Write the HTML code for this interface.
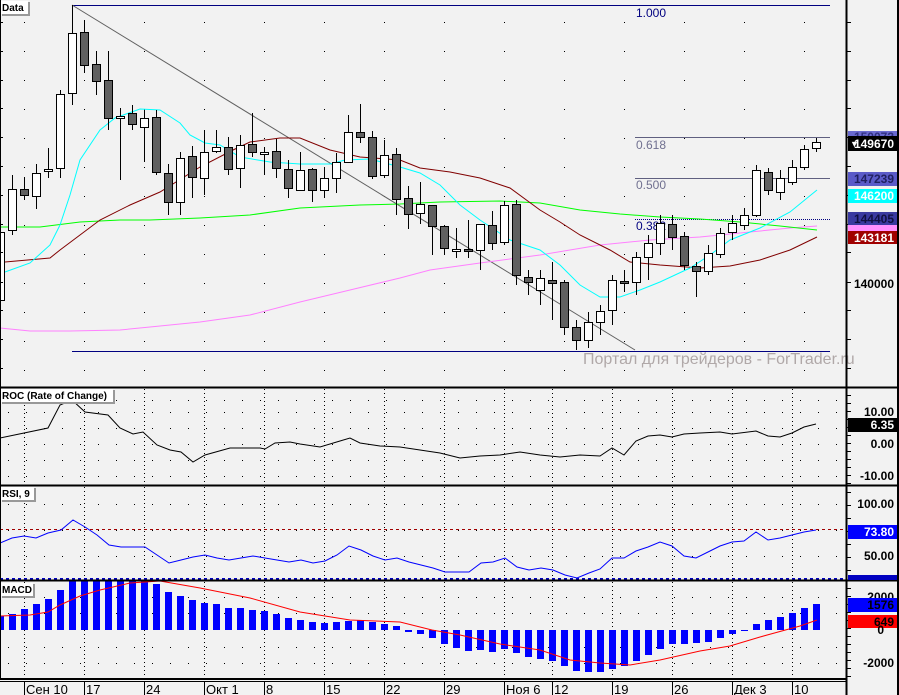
<!DOCTYPE html>
<html><head><meta charset="utf-8"><style>
html,body{margin:0;padding:0;background:#f2f2f2;}
svg{display:block;font-family:"Liberation Sans",sans-serif;}
.ax{font-family:"Liberation Sans",sans-serif;font-weight:bold;font-size:12px;}
</style></head><body>
<svg id="s" width="899" height="695" viewBox="0 0 899 695" xmlns="http://www.w3.org/2000/svg">
<rect width="899" height="695" fill="#f2f2f2"/>
<g id="grid"></g>
<line x1="72" y1="5.5" x2="830" y2="5.5" stroke="#000080" stroke-width="1"/>
<line x1="72" y1="351.5" x2="830" y2="351.5" stroke="#000080" stroke-width="1"/>
<line x1="635" y1="137.5" x2="830" y2="137.5" stroke="#606080" stroke-width="1"/>
<line x1="635" y1="178.5" x2="830" y2="178.5" stroke="#606080" stroke-width="1"/>
<line x1="635" y1="219.5" x2="830" y2="219.5" stroke="#000080" stroke-width="1" stroke-dasharray="1,1"/>
<line x1="72" y1="5" x2="635" y2="350" stroke="#606060" stroke-width="1"/>
<text x="636" y="17" font-size="12" fill="#000080">1.000</text>
<text x="636" y="149" font-size="12" fill="#707090">0.618</text>
<text x="636" y="189" font-size="12" fill="#707090">0.500</text>
<text x="636" y="230" font-size="12" fill="#000080">0.382</text>
<polyline fill="none" stroke="#ff80ff" stroke-width="1" points="0,328 30,331 70,331 120,330 150,327 200,322 250,315 300,302 350,290 400,278 430,270 480,263 540,255 600,245 650,240 700,237 750,232 790,228 817,226"/>
<polyline fill="none" stroke="#00ff00" stroke-width="1" points="0,227 40,227 80,222 120,220 150,220 200,218 250,215 300,208 360,205 400,204 440,202 500,201 540,203 580,210 620,214 660,217 700,219 740,222 780,226 817,230"/>
<polyline fill="none" stroke="#800000" stroke-width="1" points="5,262 50,258 60,250 80,235 100,220 130,205 160,192 200,167 233,150 250,142 280,138 300,138 330,150 360,157 400,160 420,168 450,172 480,178 510,188 540,210 560,222 580,235 610,250 630,262 660,265 700,268 730,266 760,260 790,250 817,237"/>
<polyline fill="none" stroke="#00ffff" stroke-width="1" points="5,272 30,263 50,245 60,225 70,195 80,160 100,130 115,118 140,109 160,110 180,123 190,135 205,143 220,145 240,157 270,162 300,164 330,164 345,160 370,159 400,167 420,173 440,185 460,205 480,220 510,240 540,250 560,265 580,285 600,297 620,297 640,290 660,282 690,268 710,255 730,240 760,228 790,212 817,190"/>
<g id="candles"></g>
<text x="583" y="364" font-size="16" fill="#b0a8a8">Портал для трейдеров - ForTrader.ru</text>
<polyline fill="none" stroke="#000" stroke-width="1" points="0,438 48,428 60,405 72,400 85,412 108,415 120,428 133,434 143,432 157,445 170,450 181,452 193,462 205,455 230,448 260,448 265,449 275,443 290,442 300,444 320,447 340,441 350,438 360,443 380,446 400,447 420,450 440,453 460,458 480,456 500,455 520,452 540,455 560,457 580,455 600,456 612,448 624,455 636,441 648,436 660,435 672,437 684,434 700,433 720,432 732,434 756,431 768,436 780,437 792,433 804,427 816,424"/>
<line x1="0" y1="529.5" x2="845" y2="529.5" stroke="#a00000" stroke-dasharray="3,3"/>
<line x1="0" y1="579" x2="845" y2="579" stroke="#0000c0" stroke-width="2" stroke-dasharray="3,3"/>
<polyline fill="none" stroke="#0000ff" stroke-width="1" points="0,543 12,538 24,536 36,538 48,533 61,530 73,520 85,527 97,535 109,545 121,547 133,547 145,547 157,555 169,563 181,560 193,557 205,555 217,558 229,560 241,558 253,556 265,558 277,560 289,562 301,560 313,563 325,561 337,555 349,546 361,550 373,556 385,560 397,558 409,562 421,565 433,568 445,572 457,572 469,572 481,563 493,562 505,558 517,567 529,570 541,568 553,570 565,575 577,578 589,573 600,569 612,558 624,558 636,551 648,547 660,542 672,546 684,556 696,558 708,552 720,546 732,542 744,541 756,532 768,540 780,538 792,535 804,532 816,530"/>
<g id="macd"></g>
<polyline fill="none" stroke="#ff0000" stroke-width="1" points="0,616 30,615 48,612 60,605 80,596 100,590 130,583 160,581 200,588 250,598 300,612 350,620 400,622 432,630 460,635 500,644 540,650 570,660 600,663 630,665 660,660 700,651 730,646 760,637 800,626 817,620"/>
<g stroke="#000" fill="none">
<line x1="0" y1="387.5" x2="899" y2="387.5" stroke-width="2"/>
<line x1="0" y1="485.5" x2="899" y2="485.5" stroke-width="2"/>
<line x1="0" y1="580.5" x2="899" y2="580.5" stroke-width="2"/>
<line x1="0" y1="679" x2="846" y2="679" stroke-width="2"/>
<line x1="0" y1="681.5" x2="846" y2="681.5" stroke-width="1"/>
<line x1="846.5" y1="0" x2="846.5" y2="695" stroke-width="2"/>
<line x1="898" y1="0" x2="898" y2="695" stroke-width="2"/>
<line x1="0.5" y1="0" x2="0.5" y2="680" stroke-width="1"/>
</g>
<g id="ticks" stroke="#000"></g>
<g font-size="10" font-weight="bold" font-family="Liberation Sans,sans-serif">
<rect x="1" y="1" width="27" height="13" fill="#fff"/><rect x="28" y="2" width="2" height="13" fill="#999"/><rect x="2" y="14" width="28" height="2" fill="#999"/><text x="2" y="11">Data</text>
<rect x="1" y="389" width="112" height="13" fill="#fff"/><rect x="113" y="390" width="2" height="13" fill="#999"/><rect x="2" y="402" width="113" height="2" fill="#999"/><text x="2" y="399">ROC (Rate of Change)</text>
<rect x="1" y="487" width="33" height="13" fill="#fff"/><rect x="34" y="488" width="2" height="13" fill="#999"/><rect x="2" y="500" width="34" height="2" fill="#999"/><text x="2" y="497">RSI, 9</text>
<rect x="1" y="583" width="32" height="13" fill="#fff"/><rect x="33" y="584" width="2" height="13" fill="#999"/><rect x="2" y="596" width="33" height="2" fill="#999"/><text x="2" y="593">MACD</text>
</g>
<g class="ax" text-anchor="end">
<text x="894" y="288">140000</text>
<rect x="848" y="131" width="49" height="11" fill="#6a6ad0"/><text x="894" y="141" fill="#303080">150073</text>
<rect x="848" y="136" width="49" height="15" fill="#000"/><text x="894" y="148" fill="#fff">149670</text>
<rect x="848" y="172" width="49" height="14" fill="#5a5ac8"/><text x="894" y="183" fill="#202060">147239</text>
<rect x="848" y="189" width="49" height="14" fill="#00ffff"/><text x="894" y="200" fill="#fff">146200</text>
<rect x="848" y="212" width="49" height="13" fill="#3a3aa0"/><text x="894" y="223" fill="#101040">144405</text>
<rect x="848" y="225" width="49" height="6" fill="#ff90ff"/>
<rect x="848" y="231" width="49" height="13" fill="#a00000"/><text x="894" y="242" fill="#fff">143181</text>
<text x="894" y="416">10.00</text>
<rect x="848" y="418" width="49" height="14" fill="#000"/><text x="894" y="429" fill="#fff">6.35</text>
<text x="894" y="448">0.00</text>
<text x="894" y="480">-10.00</text>
<text x="894" y="508">100.00</text>
<rect x="848" y="525" width="49" height="14" fill="#0000ff"/><text x="894" y="536" fill="#fff">73.80</text>
<text x="894" y="560">50.00</text>
<rect x="848" y="575" width="49" height="5" fill="#0000c0"/>
<text x="894" y="601">2000</text>
<rect x="848" y="598" width="49" height="14" fill="#0000ff"/><text x="894" y="609" fill="#000">1576</text>
<rect x="848" y="615" width="49" height="13" fill="#ff0000"/><text x="894" y="626" fill="#000">649</text>
<text x="884" y="634">0</text>
<text x="894" y="667">-2000</text>
</g>
<text x="850" y="147" font-size="9" fill="#fff">▼</text>
<g font-size="13" fill="#000">
<text x="26" y="694">Сен 10</text><text x="86" y="694">17</text><text x="146" y="694">24</text><text x="206" y="694">Окт 1</text><text x="266" y="694">8</text><text x="326" y="694">15</text><text x="386" y="694">22</text><text x="446" y="694">29</text><text x="506" y="694">Ноя 6</text><text x="554" y="694">12</text><text x="614" y="694">19</text><text x="674" y="694">26</text><text x="734" y="694">Дек 3</text><text x="794" y="694">10</text>
</g>
</svg>
<script>
var NS="http://www.w3.org/2000/svg";
function el(p,t,a){var e=document.createElementNS(NS,t);for(var k in a)e.setAttribute(k,a[k]);p.appendChild(e);return e;}
var G=document.getElementById('grid');
var wk=[24,84,144,204,264,324,384,444,504,552,612,672,732,792];
for(var y=22;y<380;y+=29){for(var x=24;x<840;x+=60){el(G,'rect',{x:x,y:y,width:1,height:1,fill:'#000'});}}
function dots(ys,y0,y1){wk.forEach(function(x){el(G,'line',{x1:x+.5,y1:y0,x2:x+.5,y2:y1,stroke:'#000','stroke-dasharray':'1,3'});});
 ys.forEach(function(y){for(var x=0;x<840;x+=18)el(G,'rect',{x:x+8,y:y,width:1,height:1,fill:'#000'});});}
dots([400,412,428,444,460,476],389,485);
dots([504,530,556],487,580);
dots([597,613,647,663],582,679);
var T=document.getElementById('ticks');
[22,51,80,108,137,166,195,224,252,282,310,339,368].forEach(function(y){el(T,'line',{x1:847,y1:y+.5,x2:851,y2:y+.5});el(T,'line',{x1:0,y1:y+.5,x2:3,y2:y+.5});});
for(var y=395;y<485;y+=8)el(T,'line',{x1:847,y1:y+.5,x2:851,y2:y+.5});
for(var y=492;y<580;y+=13)el(T,'line',{x1:847,y1:y+.5,x2:851,y2:y+.5});
for(var y=588;y<679;y+=8)el(T,'line',{x1:847,y1:y+.5,x2:851,y2:y+.5});
wk.forEach(function(x){el(T,'line',{x1:x+.5,y1:681,x2:x+.5,y2:695});});
var C=[[0,300,232,225,305],[12,230,189,175,235],[24,189,195,177,200],[36,196,173,164,209],[48,171,169,148,178],[60,168,94,90,178],[72,93,33,5,105],[84,32,65,20,73],[96,64,81,51,95],[108,80,118,51,130],[120,118,116,108,180],[132,113,124,105,130],[144,127,118,110,162],[156,117,172,110,175],[168,173,202,164,215],[180,202,158,152,215],[192,156,177,146,198],[204,178,152,130,195],[216,151,147,130,153],[228,147,169,137,175],[240,168,145,135,188],[252,144,152,113,157],[264,154,152,147,175],[276,151,168,139,178],[288,169,188,160,198],[300,190,170,152,190],[312,169,190,168,202],[324,190,178,168,198],[336,178,162,153,193],[348,162,132,115,162],[360,132,137,104,143],[372,137,176,131,179],[384,175,155,140,178],[396,154,199,148,215],[408,198,214,186,229],[420,213,204,182,224],[432,205,226,205,255],[444,226,248,225,255],[456,249,249,228,258],[468,249,251,220,258],[480,250,224,224,270],[492,225,243,211,250],[504,242,205,201,245],[516,204,275,200,285],[528,277,282,270,295],[540,290,278,270,305],[552,280,283,262,320],[564,282,327,280,335],[576,327,340,320,350],[588,340,322,312,348],[600,322,311,305,335],[612,310,280,275,325],[624,281,282,270,292],[636,282,257,252,295],[648,257,243,235,280],[660,243,223,215,255],[672,224,237,215,250],[684,236,265,232,270],[696,266,271,262,297],[708,271,253,245,275],[720,254,233,228,258],[732,232,223,215,240],[744,225,215,208,230],[756,215,170,165,217],[768,172,190,168,195],[780,192,178,170,200],[792,182,167,160,185],[804,167,149,145,170],[816,148,142,138,152]];
var K=document.getElementById('candles');
C.forEach(function(c){var x=c[0],o=c[1],cl=c[2],up=cl<=o,t=Math.min(o,cl),b=Math.max(o,cl);
 el(K,'line',{x1:x+.5,y1:c[3],x2:x+.5,y2:c[4],stroke:'#000','stroke-width':1});
 el(K,'rect',{x:x-3.5,y:t+.5,width:8,height:Math.max(b-t,2),fill:up?'#fff':'#606060',stroke:'#000','stroke-width':1});});
var M=[[0,616],[12,614],[24,609],[36,604],[48,599],[60,590],[72,581],[84,581],[96,581],[108,581],[120,581],[132,581],[144,581],[156,584],[168,592],[180,596],[192,600],[204,603],[216,604],[228,608],[240,608],[252,610],[264,611],[276,614],[288,618],[300,620],[312,622],[324,623],[336,622],[348,621],[360,620],[372,622],[384,624],[396,626],[408,632],[420,634],[432,638],[444,644],[456,648],[468,651],[480,650],[492,652],[504,649],[516,653],[528,657],[540,659],[552,661],[564,666],[576,671],[588,672],[600,672],[612,669],[624,666],[636,661],[648,655],[660,649],[672,644],[684,644],[696,643],[708,642],[720,638],[732,634],[744,631],[756,624],[768,620],[780,617],[792,613],[804,608],[816,604]];
var MG=document.getElementById('macd');
M.forEach(function(m){var t=Math.min(m[1],630),b=Math.max(m[1],630);el(MG,'rect',{x:m[0]-3,y:t,width:7,height:Math.max(b-t,1),fill:'#0000ff'});});
</script>
</body></html>
